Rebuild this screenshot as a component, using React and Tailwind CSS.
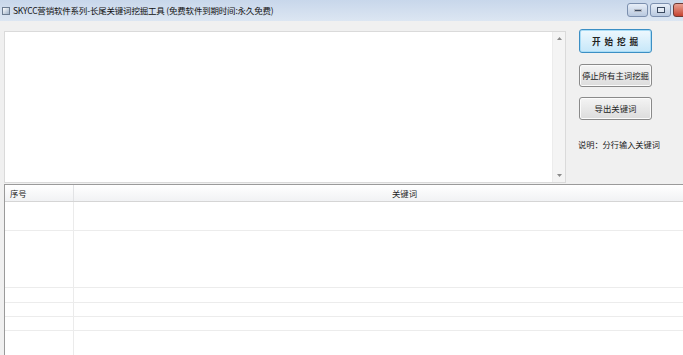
import React from "react"

const rows = [29, 57, 15, 14, 14, 30]

function WinButton({ children, close }) {
  return (
    <div
      className={
        close
          ? "w-[26px] h-[14px] border border-[#6d3a35] rounded-[3px] bg-linear-to-b from-[#e8a093] to-[#c4412f] flex items-center justify-center"
          : "w-[21px] h-[14px] border border-[#7b8fae] rounded-[3px] bg-linear-to-b from-[#e7eef8] to-[#b9c9df] flex items-center justify-center"
      }
    >
      {children}
    </div>
  )
}

export default function App() {
  return (
    <div
      className="w-[683px] h-[355px] overflow-hidden bg-[#f0f0f0] flex flex-col text-[#1a1a1a]"
      style={{ fontFamily: '"Noto Sans CJK SC", "Noto Sans", sans-serif' }}
    >
      {/* Title bar */}
      <div className="h-[21px] shrink-0 flex items-center bg-linear-to-b from-[#c8d7eb] to-[#dce6f2] pl-[2px]">
        <div className="w-[8px] h-[8px] border border-[#6d7d92] bg-linear-to-br from-[#ffffff] to-[#9fb2c9]" />
        <span className="ml-[3px] text-[8.5px] leading-none text-[#111] tracking-[-0.2px]">
          SKYCC营销软件系列-长尾关键词挖掘工具 (免费软件到期时间:永久免费)
        </span>
        <div className="ml-auto flex items-center gap-[2px] mr-[-16px] self-start mt-[3px]">
          <WinButton>
            <div className="w-[8px] h-[3px] bg-[#3b4a61] border border-white/60" />
          </WinButton>
          <WinButton>
            <div className="w-[8px] h-[6px] border-[1.5px] border-[#3b4a61] bg-white/40" />
          </WinButton>
          <WinButton close>
            <svg width="7" height="7" viewBox="0 0 7 7">
              <path d="M1 1 L6 6 M6 1 L1 6" stroke="#fff" strokeWidth="1.8" strokeLinecap="round" />
            </svg>
          </WinButton>
        </div>
      </div>

      {/* Input area + buttons */}
      <div className="flex pt-[8px] shrink-0">
        <div className="ml-[4px] mt-[2px] w-[562px] h-[152px] bg-white border border-[#dadada] flex justify-end">
          <div className="w-[13px] h-full bg-[#f4f4f4] border-l border-[#ececec] flex flex-col items-center justify-between py-[5px]">
            <svg width="5" height="3" viewBox="0 0 5 3">
              <path d="M0 3 L2.5 0 L5 3 Z" fill="#8a8a8a" />
            </svg>
            <svg width="5" height="3" viewBox="0 0 5 3">
              <path d="M0 0 L2.5 3 L5 0 Z" fill="#8a8a8a" />
            </svg>
          </div>
        </div>

        <div className="ml-[13px] flex flex-col">
          <button className="w-[73px] h-[24px] rounded-[3px] border border-[#3c8fc4] bg-linear-to-b from-[#eef8fe] to-[#c6e7f9] shadow-[inset_0_0_0_1px_#a9dcf6] text-[8.6px] font-semibold leading-none text-[#222] tracking-[1px]">
            开 始 挖 掘
          </button>
          <button className="mt-[11px] w-[73px] h-[23px] rounded-[3px] border border-[#8a8a8a] bg-linear-to-b from-[#f4f4f4] to-[#dcdcdc] shadow-[inset_0_0_0_1px_#fbfbfb] text-[8.4px] leading-none text-[#222]">
            停止所有主词挖掘
          </button>
          <button className="mt-[10px] w-[73px] h-[23px] rounded-[3px] border border-[#8a8a8a] bg-linear-to-b from-[#f4f4f4] to-[#dcdcdc] shadow-[inset_0_0_0_1px_#fbfbfb] text-[8.4px] leading-none text-[#222]">
            导出关键词
          </button>
          <p className="mt-[18px] ml-[-1px] text-[8.2px] leading-[12px] text-[#222] whitespace-nowrap">
            说明：分行输入关键词
          </p>
        </div>
      </div>

      {/* List view */}
      <div className="mt-[1px] ml-[4px] flex-1 bg-white border-l border-t border-[#9a9a9a] overflow-hidden">
        <div className="w-[730px]">
          <div className="flex h-[17px] bg-linear-to-b from-[#ffffff] to-[#f1f2f4] border-b border-[#d5d5d5] text-[8.4px] leading-none text-[#222]">
            <div className="w-[69px] shrink-0 flex items-center pl-[5px] border-r border-[#e2e3e5]">序号</div>
            <div className="flex-1 flex items-center justify-center">关键词</div>
          </div>
          {rows.map((h, i) => (
            <div key={i} className="flex border-b border-[#ececec]" style={{ height: h }}>
              <div className="w-[69px] shrink-0 border-r border-[#ebebeb]" />
              <div className="flex-1" />
            </div>
          ))}
        </div>
      </div>
    </div>
  )
}
